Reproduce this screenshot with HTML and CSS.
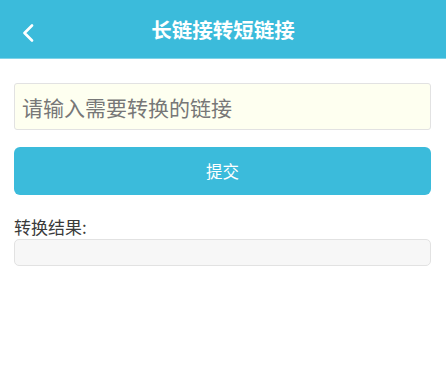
FILE: index.html
```html
<!DOCTYPE html>
<html lang="zh">
<head>
<meta charset="utf-8">
<link rel="stylesheet" href="styles.css">
</head>
<body>
<header class="bar">
  <a class="back" aria-label="返回">
    <svg width="14" height="18" viewBox="0 0 14 18"><path d="M11 1.5 L3.5 9 L11 16.5" fill="none" stroke="#fff" stroke-width="2.6" stroke-linecap="round" stroke-linejoin="round"/></svg>
  </a>
  <h1 class="title">长链接转短链接</h1>
</header>
<main class="content">
  <input class="url" type="text" placeholder="请输入需要转换的链接">
  <button class="submit">提交</button>
  <div class="label">转换结果:</div>
  <div class="result"></div>
</main>
</body>
</html>
```
FILE: styles.css
```css
* { box-sizing: border-box; }
body {
  margin: 0;
  font-family: "Noto Sans CJK SC", "Noto Sans", sans-serif;
  background: #fff;
  color: #333;
}
.bar {
  height: 59px;
  background: #3bbbdb;
  border-bottom: 1px solid #7fd3e8;
  display: flex;
  align-items: center;
  justify-content: center;
  position: relative;
}
.back {
  position: absolute;
  left: 21px;
  top: 24px;
  display: flex;
}
.title {
  margin: 0;
  color: #fff;
  font-size: 20.5px;
  font-weight: 700;
  line-height: 1;
}
.content {
  padding: 24px 15px 0 14px;
  display: flex;
  flex-direction: column;
}
.url {
  height: 47px;
  border: 1px solid #e2e2e2;
  border-radius: 3px;
  background: #fefff0;
  padding: 0 7px;
  font-family: inherit;
  font-size: 21px;
  color: #333;
  outline: none;
}
.url::placeholder { color: #777; }
.submit {
  margin-top: 17px;
  height: 48px;
  border: none;
  border-radius: 6px;
  background: #3bbbdb;
  color: #fff;
  font-family: inherit;
  font-size: 16.5px;
}
.label {
  margin-top: 20px;
  font-size: 17px;
  line-height: 24px;
  color: #3a3a3a;
}
.result {
  margin-top: 0;
  height: 27px;
  border: 1px solid #e2e2e2;
  border-radius: 5px;
  background: #f7f7f7;
}
```
